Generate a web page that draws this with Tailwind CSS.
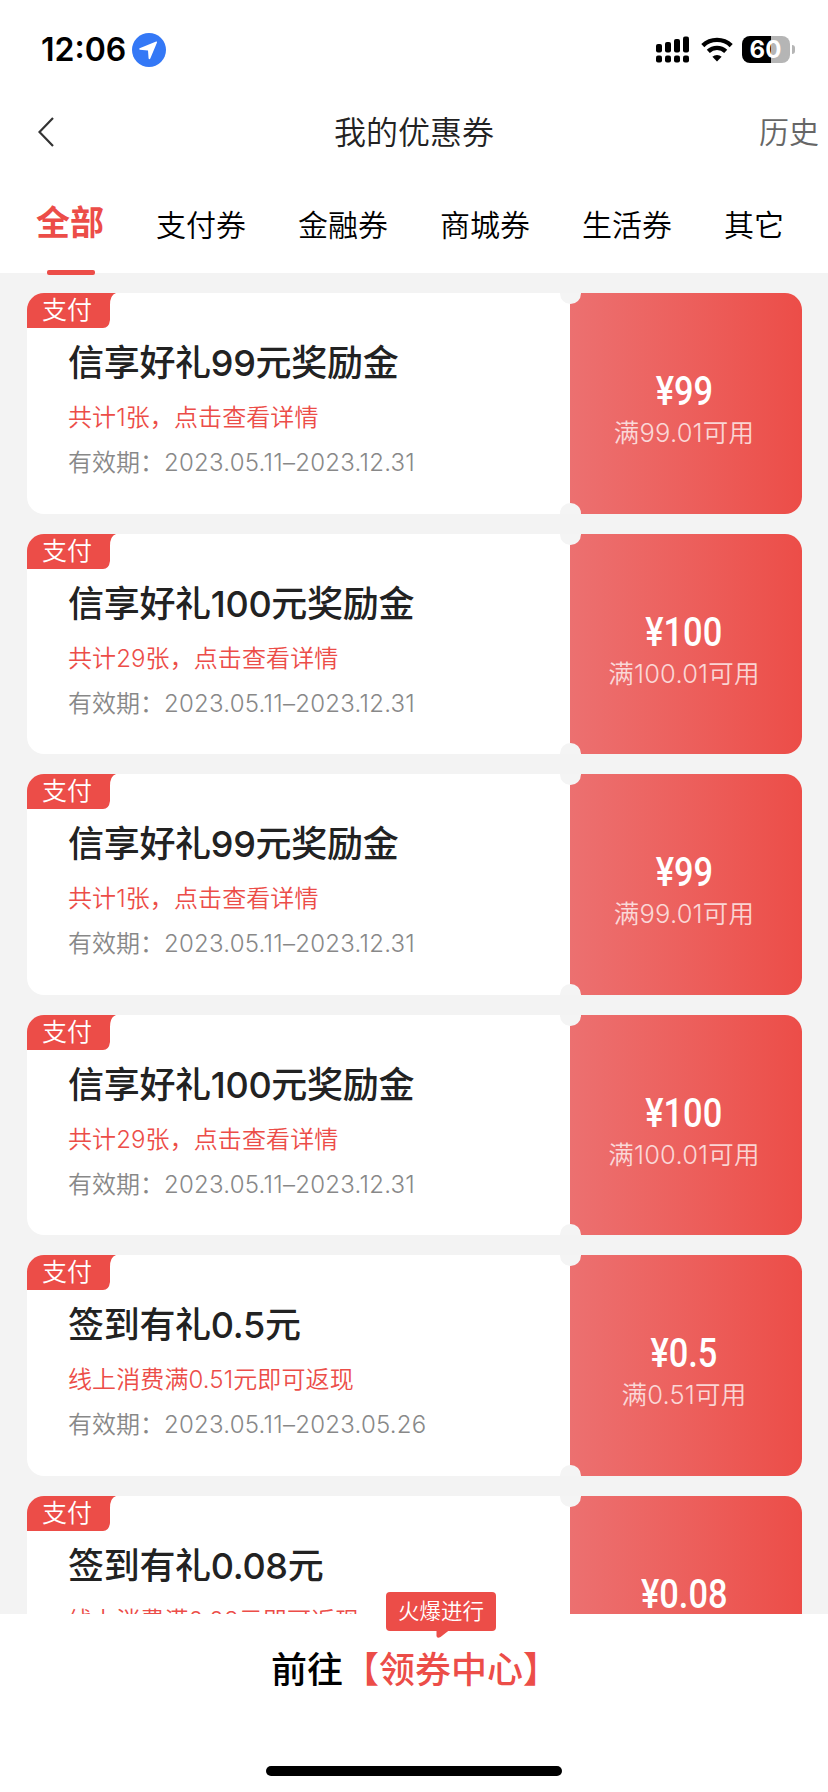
<!DOCTYPE html>
<html lang="zh-CN">
<head>
    <meta charset="UTF-8">
    <meta name="viewport" content="width=device-width, initial-scale=1.0">
    <title>我的优惠券</title>
    <script src="https://cdn.jsdelivr.net/npm/@tailwindcss/browser@4"></script>
</head>
<body class="bg-white font-['Inter','Noto_Sans_CJK_SC',sans-serif] antialiased">
<div class="flex flex-col w-[828px] h-[1792px] overflow-hidden">

    <!-- Status bar -->
    <div class="flex items-center justify-between h-[99px] shrink-0 pl-[41px] pr-[33px]">
        <div class="flex items-center gap-[6px]">
            <span class="w-[85px] text-[32px] leading-none font-semibold text-black whitespace-nowrap">12:06</span>
            <svg class="w-[34px] h-[34px]" viewBox="0 0 34 34">
                <circle cx="17" cy="17" r="17" fill="#3478f6"/>
                <path d="M24.2 8.6 L7.6 15.2 Q6.6 16 7.8 16.8 L16 17.4 L16.6 25.6 Q17.4 27 18.3 25.6 L25 9.4 Q25.2 8.3 24.2 8.6Z" fill="#fff"/>
            </svg>
        </div>
        <div class="flex items-center">
            <svg class="w-[33px] h-[27px] mr-3" viewBox="0 0 33 27">
                <rect x="0" y="8" width="6" height="8.5" rx="2"/>
                <rect x="9" y="6" width="6" height="10.5" rx="2"/>
                <rect x="18" y="3" width="6" height="13.5" rx="2"/>
                <rect x="27" y="0.5" width="6" height="16" rx="2"/>
                <rect x="0" y="19.5" width="6" height="7" rx="2"/>
                <rect x="9" y="19.5" width="6" height="7" rx="2"/>
                <rect x="18" y="19.5" width="6" height="7" rx="2"/>
                <rect x="27" y="19.5" width="6" height="7" rx="2"/>
            </svg>
            <svg class="w-8 h-[25px] mr-[9px]" viewBox="0 0 32 25" fill="none" stroke="#000" stroke-width="4.4">
                <path d="M1.8 8.6 A20.5 20.5 0 0 1 30.2 8.6"/>
                <path d="M7.3 14.4 A12.6 12.6 0 0 1 24.7 14.4"/>
                <path d="M16 24.5 L11.4 19.8 A6.6 6.6 0 0 1 20.6 19.8Z" fill="#000" stroke="none"/>
            </svg>
            <div class="flex items-center justify-center w-12 h-[27px] rounded-[8px] bg-linear-to-r from-black from-60% to-[#b5b5b5] to-60%">
                <span class="text-[24px] leading-none font-bold text-white pr-[1px]">60</span>
            </div>
            <div class="w-[3px] h-[9px] ml-[2px] rounded-r-full bg-[#b5b5b5]"></div>
        </div>
    </div>

    <!-- Title bar -->
    <div class="grid grid-cols-[1fr_auto_1fr] items-center h-[66px] shrink-0 pl-[38px] pr-[9px]">
        <svg class="w-4 h-[30px]" viewBox="0 0 16 30" fill="none" stroke="#333" stroke-width="2.2">
            <path d="M15 1 L1.5 15 L15 29"/>
        </svg>
        <h1 class="text-[32px] leading-none font-[350] text-[#222] -ml-[29px] pt-[1px]">我的优惠券</h1>
        <span class="text-[30px] leading-none font-[350] text-[#666] text-right">历史</span>
    </div>

    <!-- Tabs -->
    <div class="flex items-center gap-[52px] h-[108px] shrink-0 pl-9 text-[30px] font-[350] text-black whitespace-nowrap">
        <div class="relative flex items-center h-full pt-[7px] text-[34px] font-bold text-[#ec4d48]">
            全部
            <span class="absolute left-[11px] -bottom-[2px] w-12 h-[5px] rounded-[2px] bg-[#ec4d48]"></span>
        </div>
        <span class="pt-[12px]">支付券</span>
        <span class="pt-[12px]">金融券</span>
        <span class="pt-[12px]">商城券</span>
        <span class="pt-[12px]">生活券</span>
        <span class="pt-[12px]">其它</span>
    </div>

    <!-- Coupon list -->
    <div id="coupons" class="flex flex-col gap-5 h-[1341px] shrink-0 pl-[27px] pt-5 pr-[26px] bg-[#f3f3f3] overflow-hidden"></div>

    <!-- Footer -->
    <div class="relative flex flex-col items-center justify-between grow bg-white pt-[38px] pb-4">
        <div class="absolute left-[386px] -top-[22px] flex items-center justify-center w-[110px] h-[39px] rounded-[4px] bg-[#ec4d48] text-[21.5px] leading-none font-[350] text-white whitespace-nowrap">
            火爆进行
            <svg class="absolute left-[50px] top-[38px] w-[14px] h-2" viewBox="0 0 14 8">
                <path d="M0.5 0 H13.5 L4.5 7 Q1 9 0.5 6Z" fill="#ec4d48"/>
            </svg>
        </div>
        <p class="text-[36px] leading-9 font-medium text-black whitespace-nowrap mr-[-2px]">前往<span class="text-[#ec4d48]">【领券中心】</span></p>
        <div class="w-[296px] h-[10px] rounded-full bg-black"></div>
    </div>
</div>

<script>
    const coupons = [
        { title: '信享好礼99元奖励金', note: '共计1张，点击查看详情', date: '2023.05.11–2023.12.31', price: '99', min: '99.01' },
        { title: '信享好礼100元奖励金', note: '共计29张，点击查看详情', date: '2023.05.11–2023.12.31', price: '100', min: '100.01' },
        { title: '信享好礼99元奖励金', note: '共计1张，点击查看详情', date: '2023.05.11–2023.12.31', price: '99', min: '99.01' },
        { title: '信享好礼100元奖励金', note: '共计29张，点击查看详情', date: '2023.05.11–2023.12.31', price: '100', min: '100.01' },
        { title: '签到有礼0.5元', note: '线上消费满0.51元即可返现', date: '2023.05.11–2023.05.26', price: '0.5', min: '0.51' },
        { title: '签到有礼0.08元', note: '线上消费满0.08元即可返现', date: '2023.05.11–2023.05.26', price: '0.08', min: '0.08' }
    ];

    document.getElementById('coupons').innerHTML = coupons.map(c => `
        <div class="relative flex h-[220.6px] shrink-0 rounded-[17px] overflow-hidden bg-white">
            <!-- Type tag -->
            <div class="absolute left-0 top-0 w-[89px] h-[35px]">
                <svg class="absolute inset-0 w-[89px] h-[35px]" viewBox="0 0 89 35">
                    <path d="M0 0 H89 Q83 2 83 12 V27 Q82 35 76 35 H0Z" fill="#ec4d48"/>
                </svg>
                <span class="relative block pl-[15px] text-[25px] leading-[34px] font-[350] text-white">支付</span>
            </div>
            <div class="w-[543px] pl-[41px] pt-[50px] whitespace-nowrap">
                <h2 class="text-[36px] leading-10 font-medium tracking-[-0.3px] text-[#222]">${c.title}</h2>
                <p class="mt-[19px] text-[24px] leading-8 font-[350] tracking-[0.1px] text-[#ec4d48]">${c.note}</p>
                <p class="mt-[13px] text-[24px] leading-8 font-[350] text-[#888]">有效期：<span class="tracking-[0.25px]">${c.date}</span></p>
            </div>
            <div class="flex flex-col items-center grow pt-[79px] pr-[4px] bg-linear-to-r from-[#ec7070] to-[#ec4d48] text-white whitespace-nowrap">
                <div class="text-[40px] leading-10 font-medium font-['Roboto'] scale-x-[.86]">¥${c.price}</div>
                <div class="mt-[5px] text-[25.5px] leading-8 font-[350] tracking-[0.2px] text-white/75">满${c.min}可用</div>
            </div>
            <span class="absolute left-[533px] -top-[10px] w-[21px] h-[21px] rounded-full bg-[#f4f4f4]"></span>
            <span class="absolute left-[533px] -bottom-[10px] w-[21px] h-[21px] rounded-full bg-[#f4f4f4]"></span>
        </div>
    `).join('');
</script>
</body>
</html>
